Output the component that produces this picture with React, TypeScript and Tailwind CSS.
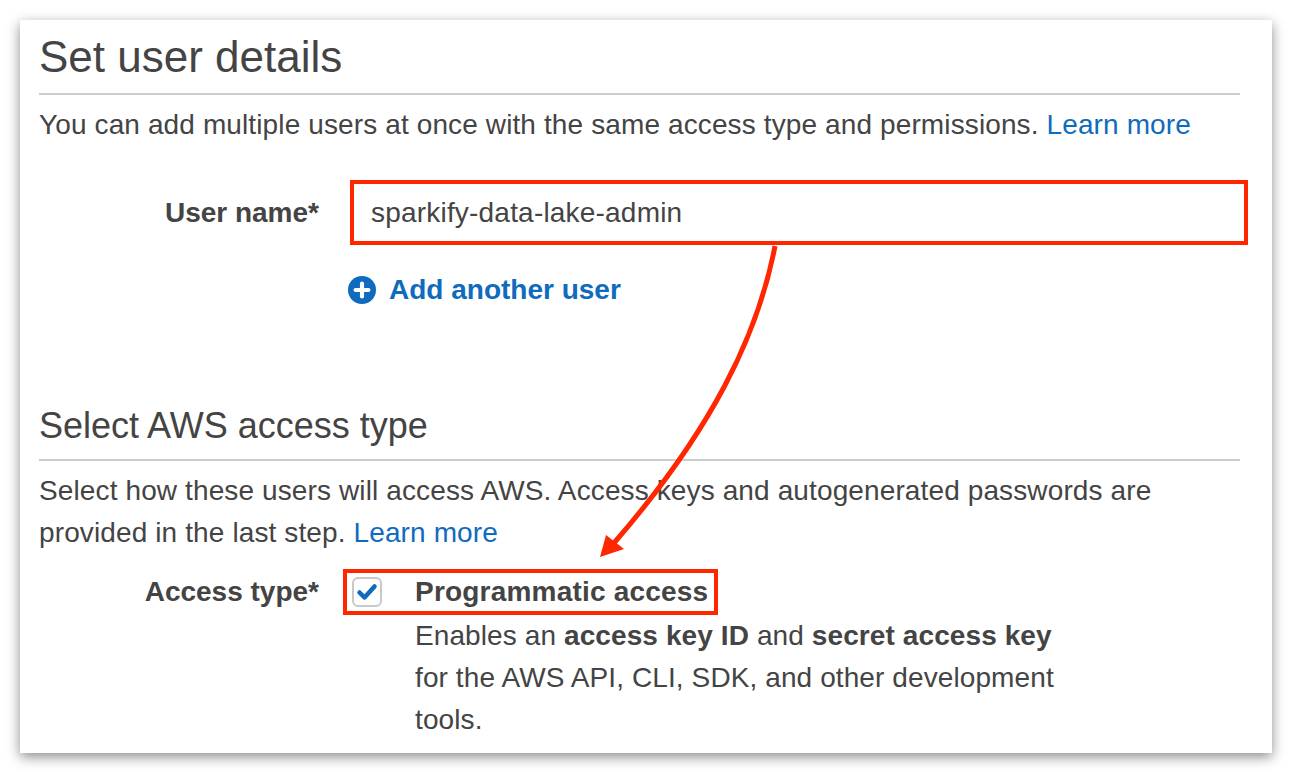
import { Plus } from 'lucide-react';

export default function App() {
  return (
    <div className="relative h-[773px] w-[1292px] bg-white font-['Liberation_Sans',Arial,sans-serif] text-[#444]">
      <div className="absolute left-[20px] top-[20px] h-[733px] w-[1252px] bg-white pl-[19px] pr-[32px] pt-[11px] shadow-[0_4px_12px_rgba(0,0,0,0.45)]">
        <h1 className="text-[44px] leading-[52px]">Set user details</h1>
        <div className="mt-[10px] h-[2px] bg-[#cccccc]" />
        <p className="mt-[9px] text-[28px] leading-[42px] tracking-[0.12px]">
          You can add multiple users at once with the same access type and permissions.{' '}
          <span className="text-[#0f6bbd]">Learn more</span>
        </p>

        <div className="mt-[34px] flex items-center gap-[31px]">
          <div className="w-[280px] text-right text-[28px] font-bold">User name*</div>
          <div className="-mr-[8px] flex h-[65px] flex-1 items-center border-4 border-[#ff2600] pl-[17px] text-[28px] tracking-[0.2px]">
            sparkify-data-lake-admin
          </div>
        </div>

        <div className="ml-[309px] mt-[24px] flex h-[42px] items-center gap-[13px] text-[28px] font-bold text-[#0f6bbd]">
          <span className="flex h-[28px] w-[28px] items-center justify-center rounded-full bg-[#0f6bbd]">
            <Plus size={22} strokeWidth={4.5} className="text-white" />
          </span>
          Add another user
        </div>

        <h2 className="mt-[93px] text-[36px] leading-[44px]">Select AWS access type</h2>
        <div className="mt-[11px] h-[2px] bg-[#cccccc]" />
        <p className="mt-[9px] text-[28px] leading-[42px] tracking-[0.12px]">
          Select how these users will access AWS. Access keys and autogenerated passwords are provided in the last step.{' '}
          <span className="text-[#0f6bbd]">Learn more</span>
        </p>

        <div className="mt-[15px] flex items-center gap-[24px]">
          <div className="w-[280px] text-right text-[28px] font-bold">Access type*</div>
          <div className="flex h-[46px] w-[375px] items-center border-4 border-[#ff2600] pl-[5px]">
            <span className="flex h-[30px] w-[30px] items-center justify-center rounded-[6px] border-2 border-[#c8c8c8] bg-white">
              <svg width="22" height="18" viewBox="0 0 22 18" fill="none">
                <path d="M3.5 9.5 L8.5 14.5 L18.5 3.5" stroke="#0f6bbd" strokeWidth="4.5" strokeLinecap="round" strokeLinejoin="round" />
              </svg>
            </span>
            <span className="ml-[33px] text-[28px] font-bold tracking-[0.2px]">Programmatic access</span>
          </div>
        </div>
        <p className="ml-[376px] w-[650px] text-[28px] leading-[42px] tracking-[0.1px]">
          Enables an <b>access key ID</b> and <b>secret access key</b> for the AWS API, CLI, SDK, and other development tools.
        </p>
      </div>

      <svg className="pointer-events-none absolute left-0 top-0" width="1292" height="773" viewBox="0 0 1292 773">
        <path d="M775 246 C 758 335, 712 430, 614 543" stroke="#ff2600" strokeWidth="5" fill="none" />
        <polygon points="600,557 606,535 624,549" fill="#ff2600" />
      </svg>
    </div>
  );
}
